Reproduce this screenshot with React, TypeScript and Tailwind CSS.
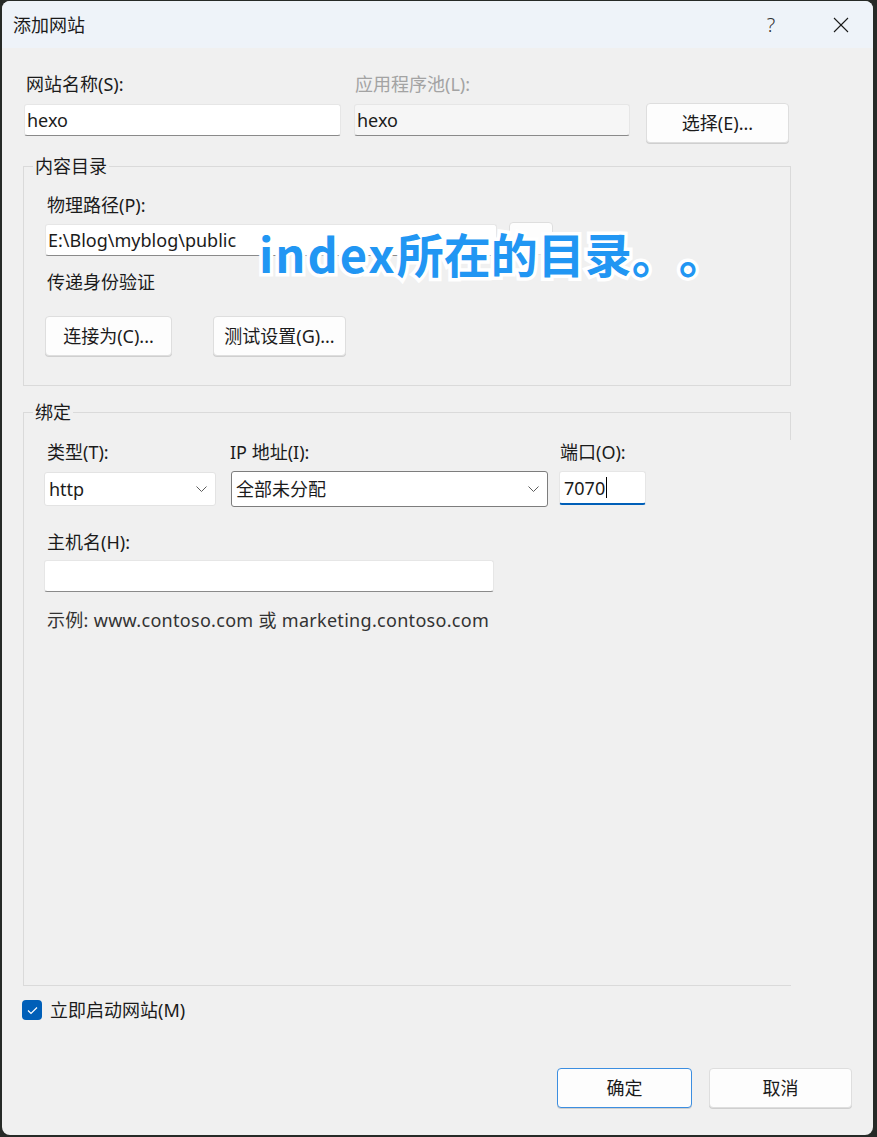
import React from "react";

const ui = "font-['Noto_Sans','Noto_Sans_CJK_SC',sans-serif]";

function Chevron() {
  return (
    <svg width="11" height="6" viewBox="0 0 11 6" fill="none" stroke="#5c5c5c" strokeWidth="1">
      <polyline points="0.5 0.5 5.5 5.5 10.5 0.5" />
    </svg>
  );
}

function Btn({ label, w, primary }: { label: string; w: string; primary?: boolean }) {
  return (
    <button
      type="button"
      className={`${w} h-[40px] flex items-center justify-center rounded-[4px] bg-[#fdfdfd] text-[18px] leading-[22px] text-[#1b1b1b] shadow-[0_1px_0_#cfcfcf] ${
        primary ? "border-[1.5px] border-[#3c8ee0]" : "border border-[#dedede]"
      }`}
    >
      {label}
    </button>
  );
}

function TextBox({ value, w, disabled }: { value?: string; w: string; disabled?: boolean }) {
  return (
    <div
      className={`${w} h-[32px] flex items-center pl-[2px] rounded-[3px] border border-[#e6e6e6] border-b-[#8a8a8a] text-[18px] ${
        disabled ? "bg-[#f6f6f6]" : "bg-white"
      } text-[#1b1b1b]`}
    >
      {value}
    </div>
  );
}

export default function App() {
  return (
    <div className={`w-[877px] h-[1137px] bg-[#262a27] pt-px pl-[2px] ${ui}`}>
      <div className="relative w-[871px] h-[1134px] rounded-[8px] overflow-hidden bg-[#f0f0f0] flex flex-col">
        {/* title bar */}
        <div className="h-[47px] shrink-0 bg-[#eef3f9] flex items-center pl-[11px] pr-[9px]">
          <span className="text-[18px] leading-[22px] text-[#1a1a1a]">添加网站</span>
          <span className="ml-auto w-[46px] text-center text-[20px] font-light text-[#333]">?</span>
          <span className="ml-[24px] w-[46px] flex justify-center">
            <svg width="16" height="16" viewBox="0 0 16 16" stroke="#1a1a1a" strokeWidth="1.1">
              <line x1="1" y1="1" x2="15" y2="15" />
              <line x1="15" y1="1" x2="1" y2="15" />
            </svg>
          </span>
        </div>

        <div className="flex flex-col pl-[21px] pt-[25px] text-[18px] leading-[22px] text-[#1b1b1b]">
          {/* site name / app pool */}
          <div className="flex items-start">
            <div className="ml-px w-[317px] flex flex-col">
              <span className="pl-[2px]">网站名称(S):</span>
              <div className="mt-[9px]">
                <TextBox value="hexo" w="w-[317px]" />
              </div>
            </div>
            <div className="ml-[13px] w-[276px] flex flex-col">
              <span className="pl-px text-[#a3a3a3]">应用程序池(L):</span>
              <div className="mt-[9px]">
                <TextBox value="hexo" w="w-[276px]" disabled />
              </div>
            </div>
            <div className="ml-[16px] mt-[30px]">
              <Btn label="选择(E)..." w="w-[143px]" />
            </div>
          </div>

          {/* content directory */}
          <div className="mt-[23px] w-[768px] border border-[#dadada] flex flex-col">
            <span className="self-start -mt-[12px] ml-[9px] px-[2px] bg-[#f0f0f0]">内容目录</span>
            <div className="flex flex-col pl-[21px] pb-[29px]">
              <span className="mt-[17px] pl-[2px]">物理路径(P):</span>
              <div className="mt-[8px] flex items-start">
                <TextBox value="E:\Blog\myblog\public" w="w-[452px]" />
                <div className="ml-[12px] -mt-[2px] w-[44px] h-[33px] rounded-[4px] bg-[#fdfdfd] border border-[#dedede] flex items-center justify-center">
                  ...
                </div>
              </div>
              <span className="mt-[15px] pl-[2px]">传递身份验证</span>
              <div className="mt-[23px] flex">
                <Btn label="连接为(C)..." w="w-[127px]" />
                <div className="ml-[41px]">
                  <Btn label="测试设置(G)..." w="w-[133px]" />
                </div>
              </div>
            </div>
          </div>

          {/* bindings */}
          <div className="mt-[26px] w-[768px] h-[574px] border-l border-t border-b border-[#dadada] flex">
            <div className="flex-1 flex flex-col">
              <span className="self-start -mt-[12px] ml-[9px] px-[2px] bg-[#f0f0f0]">绑定</span>
              <div className="flex flex-col pl-[20px]">
                <div className="mt-[18px] flex items-start">
                  <div className="w-[172px] flex flex-col">
                    <span className="pl-[3px]">类型(T):</span>
                    <div className="mt-[9px] h-[34px] flex items-center justify-between pl-[4px] pr-[8px] bg-white border border-[#e3e3e3] rounded-[3px]">
                      <span>http</span>
                      <Chevron />
                    </div>
                  </div>
                  <div className="ml-[15px] w-[317px] flex flex-col">
                    <span className="-ml-px">IP 地址(I):</span>
                    <div className="mt-[8px] h-[36px] flex items-center justify-between pl-[4px] pr-[8px] bg-white border border-[#7d7d7d] rounded-[3px]">
                      <span>全部未分配</span>
                      <Chevron />
                    </div>
                  </div>
                  <div className="ml-[11px] w-[87px] flex flex-col">
                    <span className="pl-px">端口(O):</span>
                    <div className="mt-[8px] h-[34px] flex items-center pl-[4px] bg-white border border-[#e6e6e6] border-b-2 border-b-[#005fb8] rounded-[3px]">
                      <span>7070</span>
                      <span className="ml-px w-px h-[21px] bg-black" />
                    </div>
                  </div>
                </div>
                <span className="mt-[24px] pl-[3px]">主机名(H):</span>
                <div className="mt-[7px]">
                  <TextBox w="w-[450px]" />
                </div>
                <span className="mt-[17px] pl-[3px] text-[#333] tracking-[0.3px]">
                  示例: www.contoso.com 或 marketing.contoso.com
                </span>
              </div>
            </div>
            <div className="w-px h-[27px] bg-[#dadada]" />
          </div>

          {/* start immediately */}
          <div className="mt-[13px] flex items-center">
            <span className="-ml-px w-[20px] h-[20px] rounded-[4px] bg-[#005fb8] flex items-center justify-center">
              <svg width="11" height="9" viewBox="0 0 11 9" fill="none" stroke="#fff" strokeWidth="1.2">
                <polyline points="1 4.5 4 7.5 10 1.5" />
              </svg>
            </span>
            <span className="ml-[8px]">立即启动网站(M)</span>
          </div>

          {/* dialog buttons */}
          <div className="mt-[47px] ml-[534px] flex">
            <Btn label="确定" w="w-[135px]" primary />
            <div className="ml-[17px]">
              <Btn label="取消" w="w-[143px]" />
            </div>
          </div>
        </div>

        {/* annotation */}
        <div className="absolute left-[257px] top-[228px] text-[47px] leading-none font-bold text-[#2196f3] font-['Noto_Sans_CJK_SC',sans-serif] [-webkit-text-stroke:7px_#fff] [paint-order:stroke_fill] [text-spacing-trim:space-all] whitespace-nowrap">
          <span className="tracking-[2px]">index</span>所在的目录。。
        </div>
      </div>
    </div>
  );
}
